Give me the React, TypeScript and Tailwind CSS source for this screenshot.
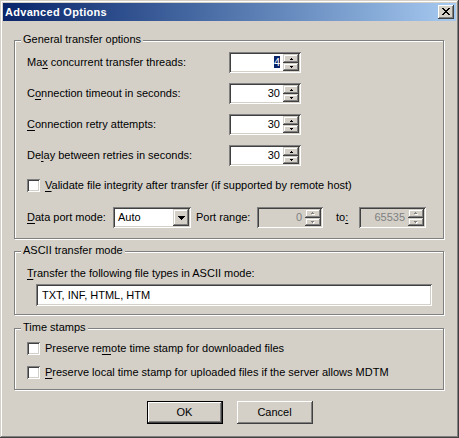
import React from 'react';

const SUNKEN =
  'shadow-[inset_1px_1px_#808080,inset_-1px_-1px_#ffffff,inset_2px_2px_#404040,inset_-2px_-2px_#d4d0c8]';
const FRAME_RAISED =
  'shadow-[inset_-1px_-1px_#404040,inset_1px_1px_#d4d0c8,inset_-2px_-2px_#808080,inset_2px_2px_#ffffff]';
const BTN_RAISED =
  'shadow-[inset_-1px_-1px_#404040,inset_1px_1px_#ffffff,inset_-2px_-2px_#808080]';
const ETCHED = 'border border-[#808080] shadow-[inset_1px_1px_#ffffff,1px_1px_#ffffff]';

function Tri({ up, w, h, color = '#000000', shadow = false }: { up: boolean; w: number; h: number; color?: string; shadow?: boolean }) {
  const rects: React.ReactNode[] = [];
  for (let i = 0; i < h; i++) {
    const row = up ? i : h - 1 - i;
    const width = 1 + row * 2;
    const x = (w - width) / 2;
    if (shadow) rects.push(<rect key={'s' + i} x={x + 1} y={i + 1} width={width} height={1} fill="#ffffff" />);
    rects.push(<rect key={i} x={x} y={i} width={width} height={1} fill={color} />);
  }
  return (
    <svg width={w + (shadow ? 1 : 0)} height={h + (shadow ? 1 : 0)} shapeRendering="crispEdges" className="block">
      {rects}
    </svg>
  );
}

function Spin({
  value,
  className,
  disabled = false,
  selected = false,
}: {
  value: string;
  className: string;
  disabled?: boolean;
  selected?: boolean;
}) {
  return (
    <div className={`flex h-[21px] p-[2px] ${SUNKEN} ${disabled ? 'bg-[#d4d0c8]' : 'bg-white'} ${className}`}>
      <div className={`flex-1 text-right pr-[3px] leading-[17px] ${disabled ? 'text-[#808080]' : 'text-black'}`}>
        {selected ? <span className="bg-[#0a246a] text-white">{value}</span> : value}
      </div>
      <div className="flex flex-col w-[16px]">
        <div className={`h-[9px] flex items-center justify-center bg-[#d4d0c8] ${FRAME_RAISED}`}>
          <Tri up w={3} h={2} color={disabled ? '#808080' : '#000000'} shadow={disabled} />
        </div>
        <div className={`h-[8px] flex items-center justify-center bg-[#d4d0c8] ${FRAME_RAISED}`}>
          <Tri up={false} w={3} h={2} color={disabled ? '#808080' : '#000000'} shadow={disabled} />
        </div>
      </div>
    </div>
  );
}

function Check({ children }: { children: React.ReactNode }) {
  return (
    <div className="flex items-center h-[13px]">
      <div className={`w-[13px] h-[13px] bg-white ${SUNKEN}`} />
      <div className="ml-[5px] leading-[13px] whitespace-nowrap">{children}</div>
    </div>
  );
}

function U({ children }: { children: React.ReactNode }) {
  return <span className="underline underline-offset-[2px]">{children}</span>;
}

function Group({ label, className, children }: { label: string; className: string; children: React.ReactNode }) {
  return (
    <div className={`relative w-[430px] ${ETCHED} ${className}`}>
      <div className="absolute -top-[8px] left-[6px] px-[2px] bg-[#d4d0c8] leading-[13px] whitespace-nowrap">{label}</div>
      {children}
    </div>
  );
}

function Row({ label, children }: { label: React.ReactNode; children: React.ReactNode }) {
  return (
    <div className="flex items-center h-[21px]">
      <div className="w-[202px] leading-[13px] whitespace-nowrap">{label}</div>
      {children}
    </div>
  );
}

export default function App() {
  return (
    <div
      className={`w-[459px] h-[438px] bg-[#d4d0c8] p-[3px] flex flex-col text-[11px] text-black font-['Liberation_Sans',Arial,sans-serif] ${FRAME_RAISED}`}
    >
      {/* Title bar */}
      <div className="h-[18px] flex items-center justify-between pl-[2px] pr-[2px] bg-linear-to-r from-[#0a246a] to-[#a6caf0]">
        <div className="text-white font-bold leading-[13px] tracking-[0.3px]">Advanced Options</div>
        <div className={`w-[16px] h-[14px] bg-[#d4d0c8] flex items-center justify-center ${BTN_RAISED}`}>
          <svg width="8" height="7" shapeRendering="crispEdges" className="block -mt-[1px]">
            <rect x="0" y="0" width="2" height="1" />
            <rect x="6" y="0" width="2" height="1" />
            <rect x="1" y="1" width="2" height="1" />
            <rect x="5" y="1" width="2" height="1" />
            <rect x="2" y="2" width="4" height="1" />
            <rect x="3" y="3" width="2" height="1" />
            <rect x="2" y="4" width="4" height="1" />
            <rect x="1" y="5" width="2" height="1" />
            <rect x="5" y="5" width="2" height="1" />
            <rect x="0" y="6" width="2" height="1" />
            <rect x="6" y="6" width="2" height="1" />
          </svg>
        </div>
      </div>

      <div className="flex flex-col px-[11px]">
        {/* General transfer options */}
        <Group label="General transfer options" className="mt-[19px] h-[199px] pl-[12px] pt-[11px]">
          <div className="flex flex-col">
            <Row label={<>Ma<U>x</U> concurrent transfer threads:</>}>
              <Spin value="4" selected className="w-[72px]" />
            </Row>
            <div className="mt-[10px]">
              <Row label={<>C<U>o</U>nnection timeout in seconds:</>}>
                <Spin value="30" className="w-[72px]" />
              </Row>
            </div>
            <div className="mt-[10px]">
              <Row label={<><U>C</U>onnection retry attempts:</>}>
                <Spin value="30" className="w-[72px]" />
              </Row>
            </div>
            <div className="mt-[10px]">
              <Row label={<>De<U>l</U>ay between retries in seconds:</>}>
                <Spin value="30" className="w-[72px]" />
              </Row>
            </div>
            <div className="mt-[13px]">
              <Check>
                <U>V</U>alidate file integrity after transfer (if supported by remote host)
              </Check>
            </div>
            <div className="mt-[15px] flex items-center h-[21px]">
              <div className="w-[86px] leading-[13px] whitespace-nowrap">
                <U>D</U>ata port mode:
              </div>
              <div className={`w-[78px] h-[21px] p-[2px] bg-white flex ${SUNKEN}`}>
                <div className="flex-1 pl-[3px] leading-[17px]">Auto</div>
                <div className={`w-[16px] h-[17px] bg-[#d4d0c8] flex items-center justify-center ${FRAME_RAISED}`}>
                  <Tri up={false} w={7} h={4} />
                </div>
              </div>
              <div className="ml-[5px] w-[61px] leading-[13px] whitespace-nowrap">Port range:</div>
              <Spin value="0" disabled className="w-[66px]" />
              <div className="ml-[13px] w-[23px] leading-[13px] whitespace-nowrap">
                to<U>:</U>
              </div>
              <Spin value="65535" disabled className="w-[67px]" />
            </div>
          </div>
        </Group>

        {/* ASCII transfer mode */}
        <Group label="ASCII transfer mode" className="mt-[12px] h-[64px] pl-[12px] pt-[15px]">
          <div className="leading-[13px] whitespace-nowrap">
            <U>T</U>ransfer the following file types in ASCII mode:
          </div>
          <div className={`mt-[4px] ml-[9px] w-[396px] h-[22px] bg-white pl-[6px] pt-[2px] leading-[18px] ${SUNKEN}`}>
            TXT, INF, HTML, HTM
          </div>
        </Group>

        {/* Time stamps */}
        <Group label="Time stamps" className="mt-[13px] h-[62px] pl-[12px] pt-[13px]">
          <div className="flex flex-col gap-[11px]">
            <Check>
              Preserve re<U>m</U>ote time stamp for downloaded files
            </Check>
            <Check>
              <U>P</U>reserve local time stamp for uploaded files if the server allows MDTM
            </Check>
          </div>
        </Group>

        {/* Buttons */}
        <div className="mt-[11px] flex justify-center gap-[14px]">
          <div className="w-[76px] h-[23px] border border-black">
            <div className={`w-full h-full bg-[#d4d0c8] flex items-center justify-center leading-[13px] ${BTN_RAISED}`}>
              OK
            </div>
          </div>
          <div className={`w-[76px] h-[23px] bg-[#d4d0c8] flex items-center justify-center leading-[13px] ${BTN_RAISED}`}>
            Cancel
          </div>
        </div>
      </div>
    </div>
  );
}
